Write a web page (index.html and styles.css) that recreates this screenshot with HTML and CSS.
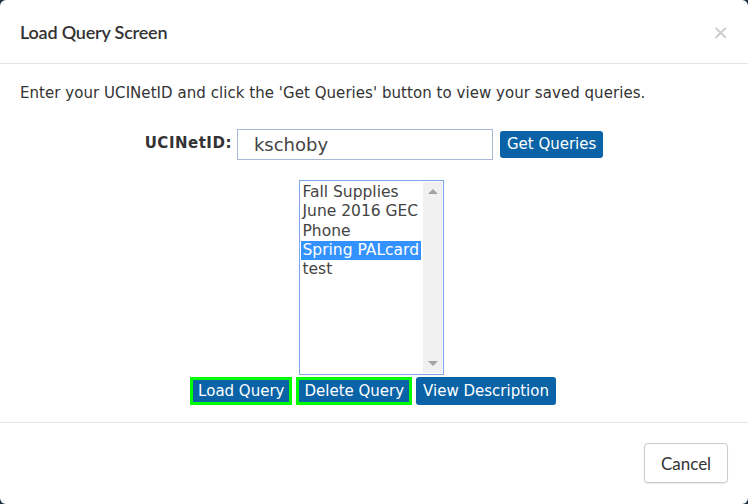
FILE: index.html
```html
<!DOCTYPE html>
<html>
<head>
<meta charset="utf-8">
<link rel="stylesheet" href="styles.css">
</head>
<body>
<div class="modal">
  <div class="modal-header">
    <h4 class="modal-title">Load Query Screen</h4>
    <span class="close">&times;</span>
  </div>
  <div class="modal-body">
    <p class="intro">Enter your UCINetID and click the 'Get Queries' button to view your saved queries.</p>
    <div class="id-row">
      <label class="id-label">UCINetID:</label>
      <div class="id-input">kschoby</div>
      <button class="btn">Get Queries</button>
    </div>
    <div class="list-wrap">
      <div class="listbox">
        <div class="options">
          <div class="opt">Fall Supplies</div>
          <div class="opt">June 2016 GEC</div>
          <div class="opt">Phone</div>
          <div class="opt selected">Spring PALcard</div>
          <div class="opt">test</div>
        </div>
        <div class="scrollbar">
          <span class="arrow up"></span>
          <span class="arrow down"></span>
        </div>
      </div>
    </div>
    <div class="actions">
      <button class="btn outlined">Load Query</button>
      <button class="btn outlined">Delete Query</button>
      <button class="btn">View Description</button>
    </div>
  </div>
  <div class="modal-footer">
    <button class="cancel">Cancel</button>
  </div>
</div>
</body>
</html>
```
FILE: styles.css
```css
html, body {
  margin: 0;
  padding: 0;
  background: #1c3048;
}
body {
  width: 748px;
  height: 504px;
  overflow: hidden;
}
.modal {
  width: 748px;
  height: 504px;
  background: #fff;
  border-radius: 6px;
  display: flex;
  flex-direction: column;
  box-sizing: border-box;
}
.modal-header {
  height: 64px;
  box-sizing: border-box;
  border-bottom: 1px solid #e5e5e5;
  display: flex;
  align-items: center;
  justify-content: space-between;
  padding: 0 20px 0 20px;
}
.modal-title {
  margin: 0;
  font-family: Lato, sans-serif;
  font-size: 18px;
  font-weight: 600;
  color: #333;
  letter-spacing: -0.2px;
}
.close {
  font-family: "DejaVu Sans", sans-serif;
  font-size: 20px;
  color: #c8c8c8;
  line-height: 1;
  margin-right: -1px;
}
.modal-body {
  flex: 1;
  padding: 0 20px;
  font-family: "DejaVu Sans", Verdana, sans-serif;
  color: #333;
}
.intro {
  margin: 20px 0 0 0;
  font-size: 15px;
  line-height: 18px;
  color: #333;
  letter-spacing: 0.05px;
}
.id-row {
  margin-top: 27px;
  display: flex;
  justify-content: center;
  align-items: center;
  padding-right: 0;
}
.id-label {
  font-weight: bold;
  font-size: 15px;
  letter-spacing: 0.5px;
  color: #333;
  margin-right: 5px;
  position: relative;
  top: -2px;
}
.id-input {
  width: 256px;
  height: 31px;
  box-sizing: border-box;
  border: 1px solid #a9b8d6;
  padding-left: 16px;
  font-size: 18px;
  line-height: 29px;
  color: #444;
  margin-right: 7px;
}
.btn {
  font-family: "DejaVu Sans", Verdana, sans-serif;
  font-size: 15px;
  color: #fff;
  background: #0a63a6;
  border: none;
  border-radius: 3px;
  height: 27px;
  padding: 0 7px;
  line-height: 27px;
  cursor: pointer;
}
.list-wrap {
  display: flex;
  justify-content: center;
  margin-top: 20px;
  padding-right: 6px;
}
.listbox {
  width: 145px;
  height: 195px;
  box-sizing: border-box;
  border: 1px solid #7fa6e6;
  display: flex;
  padding: 1px;
}
.options {
  flex: 1;
  padding-top: 1px;
}
.opt {
  font-size: 15.5px;
  line-height: 19px;
  height: 19.3px;
  color: #444;
  padding-left: 2px;
  white-space: nowrap;
}
.opt.selected {
  background: #3392ff;
  color: #fff;
  margin-right: 2px;
}
.scrollbar {
  width: 19px;
  background: #f0f0f0;
  position: relative;
}
.arrow {
  position: absolute;
  left: 5px;
  width: 0;
  height: 0;
  border-left: 5px solid transparent;
  border-right: 5px solid transparent;
}
.arrow.up {
  top: 7px;
  border-bottom: 5px solid #a3a3a3;
}
.arrow.down {
  bottom: 7px;
  border-top: 5px solid #a3a3a3;
}
.actions {
  display: flex;
  justify-content: center;
  gap: 4px;
  margin-top: 2px;
  padding-right: 2px;
}
.actions .btn {
  height: 28px;
  line-height: 28px;
  font-size: 15px;
}
.btn.outlined {
  border: 3px solid #00ff00;
  border-radius: 0;
  line-height: 22px;
  padding: 0 5px;
}
.modal-footer {
  height: 82px;
  box-sizing: border-box;
  border-top: 1px solid #e5e5e5;
  display: flex;
  justify-content: flex-end;
  align-items: flex-start;
  padding: 20px 20px 0 0;
}
.cancel {
  width: 84px;
  height: 40px;
  background: #fff;
  border: 1px solid #ccc;
  border-radius: 4px;
  font-family: Lato, sans-serif;
  font-size: 17px;
  color: #333;
  box-shadow: 0 1px 1px rgba(0,0,0,0.08);
}
```
